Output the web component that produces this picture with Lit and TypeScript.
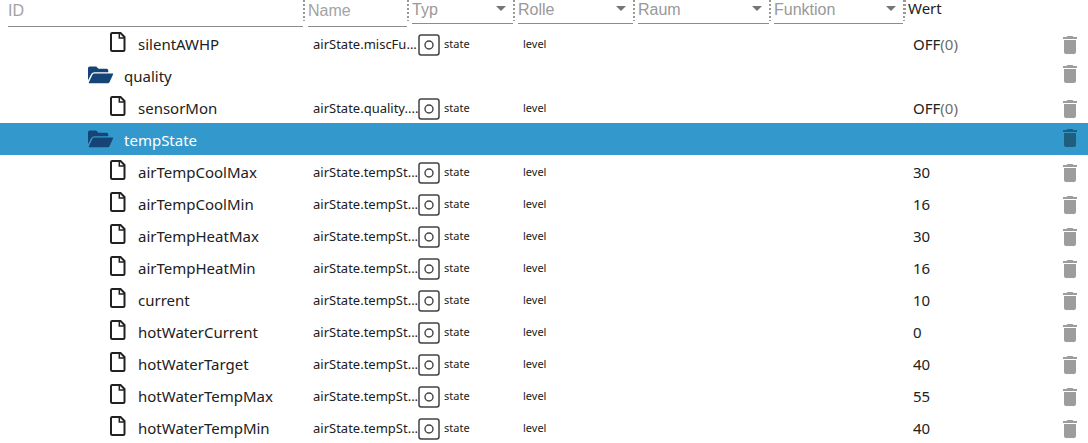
import { LitElement, html, css, svg } from "lit";
import { customElement, property } from "lit/decorators.js";
import { classMap } from "lit/directives/class-map.js";

interface Entry {
  id: string;
  folder?: boolean;
  selected?: boolean;
  name?: string;
  value?: string;
  raw?: string;
}

const entries: Entry[] = [
  { id: "silentAWHP", name: "airState.miscFu...", value: "OFF", raw: "0" },
  { id: "quality", folder: true },
  { id: "sensorMon", name: "airState.quality....", value: "OFF", raw: "0" },
  { id: "tempState", folder: true, selected: true },
  { id: "airTempCoolMax", name: "airState.tempSt...", value: "30" },
  { id: "airTempCoolMin", name: "airState.tempSt...", value: "16" },
  { id: "airTempHeatMax", name: "airState.tempSt...", value: "30" },
  { id: "airTempHeatMin", name: "airState.tempSt...", value: "16" },
  { id: "current", name: "airState.tempSt...", value: "10" },
  { id: "hotWaterCurrent", name: "airState.tempSt...", value: "0" },
  { id: "hotWaterTarget", name: "airState.tempSt...", value: "40" },
  { id: "hotWaterTempMax", name: "airState.tempSt...", value: "55" },
  { id: "hotWaterTempMin", name: "airState.tempSt...", value: "40" },
];

const icons = {
  file: {
    width: 16, height: 20,
    shape: svg`<path d="M1 2.2Q1 1 2.2 1H10.5L14.5 5V17.8Q14.5 19 13.3 19H2.2Q1 19 1 17.8Z" fill="none" stroke="currentColor" stroke-width="2"/><path d="M9.3 1.5V6H14" fill="none" stroke="currentColor" stroke-width="1.5"/>`,
  },
  folder: {
    width: 26, height: 18,
    shape: svg`<path d="M0 14.2V2.2Q0 .5 1.7.5H8.2L10.5 2.8H18.6Q20.3 2.8 20.3 4.5V6.2H6.3Q4.3 6.2 3.3 8Z" fill="currentColor"/><path d="M.8 16.4L4.4 8.7Q5 7.5 6.3 7.5H24.4Q25.5 7.5 25 8.6L21.6 16Q21 17.2 19.7 17.2H1.4Q.5 17.2.8 16.4Z" fill="currentColor"/>`,
  },
  state: {
    width: 22, height: 22,
    shape: svg`<rect x="1" y="1" width="20" height="20" rx="2.2" fill="none" stroke="currentColor" stroke-width="1.5"/><circle cx="11" cy="11" r="4" fill="none" stroke="currentColor" stroke-width="1.4"/>`,
  },
  trash: {
    width: 24, height: 24,
    shape: svg`<path d="M6 19c0 1.1.9 2 2 2h8c1.1 0 2-.9 2-2V7H6v12zM19 4h-3.5l-1-1h-5l-1 1H5v2h14V4z" fill="currentColor"/>`,
  },
  arrow: {
    width: 10, height: 5,
    shape: svg`<path d="M0 0H10L5 5Z" fill="currentColor"/>`,
  },
};

const icon = (name: keyof typeof icons) => {
  const { width, height, shape } = icons[name];
  return html`<svg class="icon" width=${width} height=${height} viewBox="0 0 ${width} ${height}" aria-hidden="true">${shape}</svg>`;
};

@customElement("filter-field")
class FilterField extends LitElement {
  @property() label = "";
  @property({ type: Boolean }) choice = false;

  static styles = css`
    :host { display: block; flex: 1; min-width: 0; }
    .field { display: grid; align-items: center; border-bottom: 1px solid #8c8c8c; color: #757575; }
    .control {
      grid-area: 1 / 1; box-sizing: border-box; width: 100%; margin: 0; padding: 0; border: 0;
      border-radius: 0; outline-offset: -2px; appearance: none; background: transparent;
      color: #999; font: 16px/20px "Liberation Sans", Arial, sans-serif;
    }
    .text { height: 26px; padding-bottom: 4px; }
    .text::placeholder { color: #a3a3a3; opacity: 1; }
    .select { height: 23px; padding-bottom: 3px; }
    .icon { grid-area: 1 / 1; justify-self: end; margin: 0 7px 6px 0; pointer-events: none; }
  `;

  render() {
    return this.choice
      ? html`<div class="field">
          <select class="control select" aria-label=${this.label}><option>${this.label}</option></select>
          ${icon("arrow")}
        </div>`
      : html`<div class="field">
          <input class="control text" type="text" placeholder=${this.label} aria-label=${this.label} />
        </div>`;
  }
}

@customElement("app-root")
class AppRoot extends LitElement {
  static styles = css`
    :host {
      display: block; background: #fff; color: #212121;
      font-family: "Noto Sans", "Open Sans", sans-serif; font-size: 15px;
    }
    .objects { width: 100%; table-layout: fixed; border-collapse: collapse; }
    .col-id { width: 305px; }
    .col-name { width: 104px; }
    .col-type { width: 106px; }
    .col-role { width: 120px; }
    .col-room { width: 136px; }
    .col-function { width: 134px; }
    .col-actions { width: 30px; }
    th, td { padding: 0; text-align: left; font-weight: 400; }
    .head { height: 27px; vertical-align: top; }
    .filter { display: flex; padding-left: 3px; }
    .filter.first { padding-left: 8px; }
    .grip {
      width: 2px; height: 21px;
      background: repeating-linear-gradient(#999 0 2px, transparent 2px 4px);
    }
    .last { display: flex; gap: 2px; }
    .last .grip { width: 1px; height: 14px; }
    .title { line-height: 16px; }
    .row { height: 32px; }
    .row.selected { background: #3399cc; color: #fff; }
    .tree { display: flex; align-items: center; padding-left: 110px; gap: 12px; line-height: 22px; }
    .tree.folder { padding-left: 88px; gap: 10px; }
    .tree span { padding-top: 2px; }
    .tree .icon { flex: none; }
    .tree:not(.folder) .icon { margin-bottom: 2px; }
    .tree.folder .icon { color: #164477; }
    .name { padding: 2px 0 0 8px; font-size: 13px; line-height: 18px; white-space: nowrap; }
    .type { display: flex; align-items: center; gap: 4px; padding: 4px 0 0 9px; font-size: 11px; line-height: 16px; }
    .type span { padding-bottom: 2px; }
    .type .icon { color: #424242; }
    .role { padding: 2px 0 0 8px; font-size: 11px; line-height: 16px; }
    .value { padding: 2px 0 0 8px; line-height: 22px; }
    .raw { color: #6b6b6b; }
    .delete {
      display: block; margin: 4px 0 0; padding: 0; width: 24px; height: 24px; border: 0;
      background: none; color: #000; opacity: 0.38; cursor: pointer;
    }
    .delete.folder { margin: 0 0 2px; }
    .icon { display: block; }
  `;

  private filter(label: string, choice = false, first = false) {
    return html`<th class="head" scope="col">
      <div class=${classMap({ filter: true, first })}>
        <filter-field .label=${label} .choice=${choice}></filter-field>
        <span class="grip"></span>
      </div>
    </th>`;
  }

  private row(e: Entry) {
    const folder = !!e.folder;
    return html`<tr class=${classMap({ row: true, selected: !!e.selected })}>
      <td><div class=${classMap({ tree: true, folder })}>${icon(folder ? "folder" : "file")}<span>${e.id}</span></div></td>
      <td>${folder ? "" : html`<div class="name">${e.name}</div>`}</td>
      <td>${folder ? "" : html`<div class="type">${icon("state")}<span>state</span></div>`}</td>
      <td>${folder ? "" : html`<div class="role">level</div>`}</td>
      <td></td>
      <td></td>
      <td><div class="value">${e.value}${e.raw ? html`<span class="raw">(${e.raw})</span>` : ""}</div></td>
      <td><button class=${classMap({ delete: true, folder })} type="button" aria-label="${e.id} löschen">${icon("trash")}</button></td>
    </tr>`;
  }

  render() {
    return html`<table class="objects">
      <colgroup>
        <col class="col-id" /><col class="col-name" /><col class="col-type" /><col class="col-role" />
        <col class="col-room" /><col class="col-function" /><col /><col class="col-actions" />
      </colgroup>
      <thead>
        <tr>
          ${this.filter("ID", false, true)} ${this.filter("Name")} ${this.filter("Typ", true)}
          ${this.filter("Rolle", true)} ${this.filter("Raum", true)} ${this.filter("Funktion", true)}
          <th class="head" scope="col"><div class="last"><span class="grip"></span><span class="title">Wert</span></div></th>
          <td></td>
        </tr>
      </thead>
      <tbody>${entries.map((e) => this.row(e))}</tbody>
    </table>`;
  }
}
